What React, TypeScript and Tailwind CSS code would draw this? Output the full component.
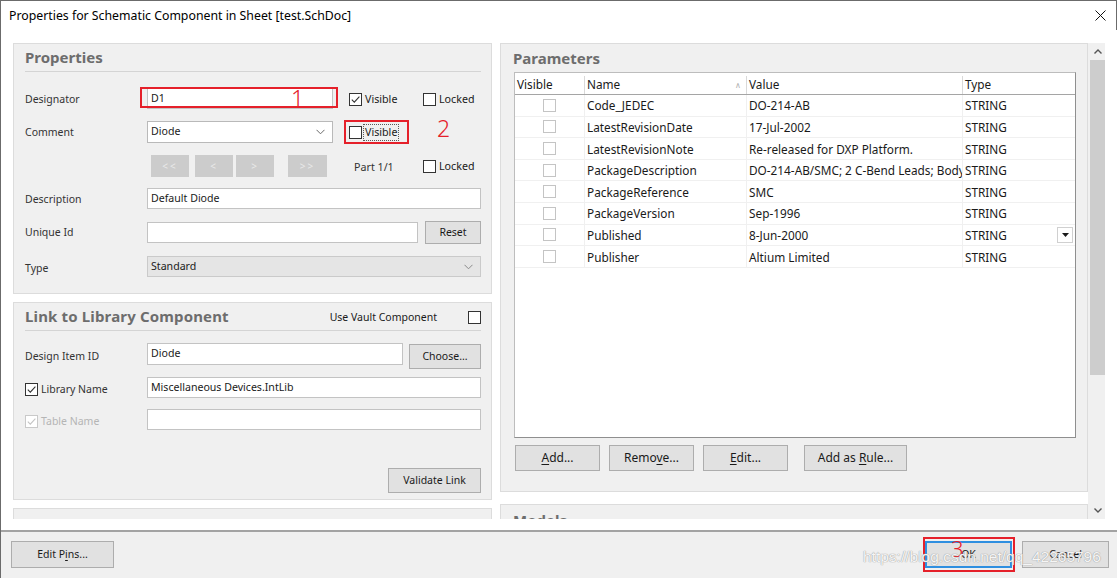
import React from "react";

type Tone = "dark" | "light" | "disabled";

function Check({ checked = false, tone = "dark" }: { checked?: boolean; tone?: Tone }) {
  const border =
    tone === "dark" ? "border-[#333333]" : tone === "light" ? "border-[#c4c4c4]" : "border-[#c9c9c9]";
  return (
    <span className={`flex h-[13px] w-[13px] shrink-0 items-center justify-center border bg-white ${border}`}>
      {checked && (
        <svg width="11" height="11" viewBox="0 0 11 11">
          <path
            d="M1.8 5.6 L4.3 8.1 L9.4 2.6"
            fill="none"
            stroke={tone === "disabled" ? "#c4c4c4" : "#333333"}
            strokeWidth="1.1"
          />
        </svg>
      )}
    </span>
  );
}

function Chevron({ color = "#6a6a6a" }: { color?: string }) {
  return (
    <svg width="9" height="6" viewBox="0 0 9 6">
      <path d="M0.5 0.8 L4.5 4.8 L8.5 0.8" fill="none" stroke={color} strokeWidth="1" />
    </svg>
  );
}

// size class is passed in by the caller (text-[10.5px] or text-[12px])
function Btn({ children, className = "" }: { children: React.ReactNode; className?: string }) {
  return (
    <div
      className={`flex shrink-0 items-center justify-center border border-[#adadad] bg-[#e1e1e1] text-[#1a1a1a] ${className}`}
    >
      <span className="whitespace-pre">{children}</span>
    </div>
  );
}

function Field({ value = "", className = "" }: { value?: string; className?: string }) {
  return (
    <div
      className={`flex shrink-0 items-center border border-[#c3c3c3] bg-white pl-[3px] text-[10.6px] text-[#1a1a1a] ${className}`}
    >
      {value}
    </div>
  );
}

function Label({ children, className = "" }: { children: React.ReactNode; className?: string }) {
  return <div className={`w-[122px] shrink-0 text-[10.5px] text-[#333333] ${className}`}>{children}</div>;
}

function NavBtn({ label, className = "" }: { label: string; className?: string }) {
  return (
    <div
      className={`flex h-[22px] shrink-0 items-center justify-center bg-[#cccccc] text-[10px] tracking-[2px] text-[#e9e9e9] ${className}`}
    >
      {label}
    </div>
  );
}

const params = [
  { name: "Code_JEDEC", value: "DO-214-AB" },
  { name: "LatestRevisionDate", value: "17-Jul-2002" },
  { name: "LatestRevisionNote", value: "Re-released for DXP Platform." },
  { name: "PackageDescription", value: "DO-214-AB/SMC; 2 C-Bend Leads; Body 7.1 x 6.1 mm" },
  { name: "PackageReference", value: "SMC" },
  { name: "PackageVersion", value: "Sep-1996" },
  { name: "Published", value: "8-Jun-2000", drop: true },
  { name: "Publisher", value: "Altium Limited" },
];

function PropertiesPanel() {
  return (
    <div className="h-[251px] shrink-0 border border-[#dcdcdc] bg-[#f0f0f0] pl-[11px] pr-[10px]">
      <div className="flex h-[28px] items-center border-b border-[#d4d4d4] text-[15px] font-bold text-[#6d6d6d]">
        Properties
      </div>

      <div className="mt-[16px] flex h-[21px] items-center">
        <Label className="pt-[3px]">Designator</Label>
        <Field value="D1" className="h-[21px] w-[186px]" />
        <div className="ml-[16px] flex w-[74px] items-center gap-[3px] pt-[2px] text-[10.7px]">
          <Check checked />
          <span>Visible</span>
        </div>
        <div className="flex items-center gap-[3px] pt-[2px] text-[10.7px]">
          <Check />
          <span>Locked</span>
        </div>
      </div>

      <div className="mt-[12px] flex h-[22px] items-center">
        <Label className="pt-[1px]">Comment</Label>
        <div className="flex h-[22px] w-[186px] shrink-0 items-center justify-between border border-[#b9b9b9] bg-white pl-[3px] pr-[7px] text-[10.6px]">
          <span>Diode</span>
          <Chevron />
        </div>
        <div className="ml-[16px] flex w-[74px] items-center gap-[1px] text-[10.7px]">
          <Check />
          <span className="border border-dotted border-[#5a5a5a] px-[1px] leading-[15px]">Visible</span>
        </div>
      </div>

      <div className="mt-[12px] flex h-[22px] items-center">
        <div className="w-[126px] shrink-0" />
        <NavBtn label="<<" className="w-[38px]" />
        <NavBtn label="<" className="ml-[6px] w-[38px]" />
        <NavBtn label=">" className="ml-[3px] w-[38px]" />
        <NavBtn label=">>" className="ml-[14px] w-[39px]" />
        <span className="ml-[27px] w-[69px] pt-[2px] text-[10.7px] text-[#333333]">Part 1/1</span>
        <div className="flex items-center gap-[3px] pt-[1px] text-[10.7px]">
          <Check />
          <span>Locked</span>
        </div>
      </div>

      <div className="mt-[11px] flex h-[21px] items-center">
        <Label className="pt-[2px]">Description</Label>
        <Field value="Default Diode" className="h-[21px] w-[334px]" />
      </div>

      <div className="mt-[12px] flex h-[23px] items-center">
        <Label>Unique Id</Label>
        <Field className="h-[21px] w-[271px]" />
        <Btn className="ml-[7px] h-[23px] w-[56px] text-[10.5px]">Reset</Btn>
      </div>

      <div className="mt-[12px] flex h-[21px] items-center">
        <Label className="pt-[4px]">Type</Label>
        <div className="flex h-[21px] w-[334px] shrink-0 items-center justify-between border border-[#cacaca] bg-[#e5e5e5] pl-[3px] pr-[7px] text-[10.6px]">
          <span>Standard</span>
          <Chevron color="#8a8a8a" />
        </div>
      </div>
    </div>
  );
}

function LinkPanel() {
  return (
    <div className="h-[198px] shrink-0 border border-[#dcdcdc] bg-[#f0f0f0] pl-[11px] pr-[10px]">
      <div className="flex h-[28px] items-center justify-between border-b border-[#d4d4d4]">
        <span className="text-[15px] font-bold tracking-[0.15px] text-[#6d6d6d]">Link to Library Component</span>
        <div className="flex items-center pt-[2px] text-[10.5px] text-[#1a1a1a]">
          <span>Use Vault Component</span>
          <span className="ml-[31px]">
            <Check />
          </span>
        </div>
      </div>

      <div className="mt-[12px] flex h-[26px] items-start">
        <Label className="pt-[6px]">Design Item ID</Label>
        <Field value="Diode" className="h-[22px] w-[256px]" />
        <Btn className="ml-[6px] mt-[1px] h-[25px] w-[72px] text-[10.5px]">Choose...</Btn>
      </div>

      <div className="mt-[8px] flex h-[21px] items-center">
        <div className="flex w-[122px] shrink-0 items-center gap-[3px] pt-[4px] text-[10.5px] text-[#333333]">
          <Check checked />
          <span>Library Name</span>
        </div>
        <Field value="Miscellaneous Devices.IntLib" className="h-[21px] w-[334px]" />
      </div>

      <div className="mt-[11px] flex h-[21px] items-center">
        <div className="flex w-[122px] shrink-0 items-center gap-[3px] pt-[4px] text-[10.5px] text-[#b5b5b5]">
          <Check checked tone="disabled" />
          <span>Table Name</span>
        </div>
        <Field className="h-[21px] w-[334px]" />
      </div>

      <div className="mt-[38px] flex justify-end">
        <Btn className="h-[25px] w-[93px] text-[10.5px]">Validate Link</Btn>
      </div>
    </div>
  );
}

function ParametersPanel() {
  return (
    <div className="h-[449px] shrink-0 border border-[#dcdcdc] bg-[#f0f0f0]">
      <div className="flex h-[28px] items-center pl-[12px] text-[15px] font-bold text-[#6d6d6d]">Parameters</div>
      <div className="ml-[13px] mr-[11px] h-[366px] border border-[#bdbdbd] border-b-[#8f8f8f] border-r-[#8f8f8f] bg-white text-[11.8px] text-[#1a1a1a]">
        <div className="flex h-[22px] border-b border-[#a5a5a5] pt-[3px]">
          <div className="flex w-[70px] items-center border-r border-[#d9d9d9] pl-[2px]">Visible</div>
          <div className="flex w-[162px] items-center justify-between border-r border-[#d9d9d9] pl-[2px] pr-[5px]">
            <span>Name</span>
            <span className="text-[8px] text-[#b0b0b0]">∧</span>
          </div>
          <div className="flex w-[216px] items-center border-r border-[#d9d9d9] pl-[2px]">Value</div>
          <div className="flex flex-1 items-center pl-[2px]">Type</div>
        </div>
        {params.map((p) => (
          <div key={p.name} className="flex h-[21.6px] border-b border-[#f0f0f0]">
            <div className="flex w-[70px] items-center justify-center border-r border-[#f0f0f0]">
              <Check tone="light" />
            </div>
            <div className="flex w-[162px] items-center border-r border-[#f0f0f0] pl-[2px] pt-[2px]">{p.name}</div>
            <div className="flex w-[216px] items-center overflow-hidden whitespace-nowrap border-r border-[#f0f0f0] pl-[2px] pt-[2px]">
              {p.value}
            </div>
            <div className="flex flex-1 items-center justify-between pl-[2px] pr-[2px]">
              <span className="pt-[2px]">STRING</span>
              {p.drop && (
                <span className="flex h-[16px] w-[16px] items-center justify-center border border-[#d0d0d0] bg-white">
                  <svg width="7" height="4" viewBox="0 0 7 4">
                    <path d="M0 0 H7 L3.5 4 Z" fill="#1a1a1a" />
                  </svg>
                </span>
              )}
            </div>
          </div>
        ))}
      </div>
      <div className="ml-[14px] mt-[7px] flex h-[26px] gap-[9px]">
        <Btn className="h-[26px] w-[85px] text-[12px]">
          <span className="underline underline-offset-2">A</span>dd...
        </Btn>
        <Btn className="h-[26px] w-[85px] text-[12px]">
          Remo<span className="underline underline-offset-2">v</span>e...
        </Btn>
        <Btn className="h-[26px] w-[85px] text-[12px]">
          <span className="underline underline-offset-2">E</span>dit...
        </Btn>
        <Btn className="ml-[7px] h-[26px] w-[103px] text-[12px]">
          Add as <span className="underline underline-offset-2">R</span>ule...
        </Btn>
      </div>
    </div>
  );
}

export default function App() {
  return (
    <div className="relative h-[578px] w-[1117px] overflow-hidden border-l border-t border-[#6b6b6b] bg-white font-['Noto_Sans',sans-serif] text-[#1a1a1a]">
      {/* title bar */}
      <div className="flex h-[29px] items-center justify-between border-r border-[#6b6b6b] pl-[8px] pr-[10px]">
        <span className="pt-[1px] text-[12.3px] text-black">Properties for Schematic Component in Sheet [test.SchDoc]</span>
        <svg width="11" height="11" viewBox="0 0 11 11">
          <path d="M0.5 0.5 L10.5 10.5 M10.5 0.5 L0.5 10.5" stroke="#111" strokeWidth="1" />
        </svg>
      </div>

      {/* scrolled content */}
      <div className="flex h-[489px] overflow-hidden pl-[12px] pt-[13px]">
        <div className="flex w-[479px] shrink-0 flex-col gap-[8px]">
          <PropertiesPanel />
          <LinkPanel />
          <div className="h-[120px] shrink-0 border border-[#dcdcdc] bg-[#f0f0f0] pl-[11px] pt-[4px] text-[15px] font-bold text-[#6d6d6d]">
            Graphical
          </div>
        </div>
        <div className="ml-[8px] flex w-[588px] shrink-0 flex-col gap-[12px]">
          <ParametersPanel />
          <div className="h-[120px] shrink-0 border border-[#dcdcdc] bg-[#f0f0f0] pl-[12px] pt-[4px] text-[15px] font-bold text-[#6d6d6d]">
            Models
          </div>
        </div>
        <div className="flex w-[17px] shrink-0 flex-col bg-[#f0f0f0]">
          <div className="flex h-[17px] items-center justify-center pl-[2px]">
            <svg width="8" height="5" viewBox="0 0 8 5">
              <path d="M0.5 4.5 L4 1 L7.5 4.5" fill="none" stroke="#555" strokeWidth="1.4" />
            </svg>
          </div>
          <div className="ml-[2px] h-[315px] bg-[#cdcdcd]" />
          <div className="flex-1" />
          <div className="flex h-[17px] items-center justify-center pl-[2px]">
            <svg width="8" height="5" viewBox="0 0 8 5">
              <path d="M0.5 0.5 L4 4 L7.5 0.5" fill="none" stroke="#555" strokeWidth="1.4" />
            </svg>
          </div>
        </div>
      </div>
      <div className="h-[11px]" />

      {/* footer */}
      <div className="flex h-[48px] items-start border-t-2 border-[#a3a3a3] bg-[#f0f0f0] pl-[10px] pt-[9px]">
        <Btn className="h-[27px] w-[103px] text-[10.5px]">
          Edit P<span className="underline underline-offset-2">i</span>ns...
        </Btn>
        <div className="flex-1" />
        <div className="flex h-[27px] w-[87px] items-center justify-center border-2 border-[#2f8fe0] bg-[#e1e1e1] text-[10.5px]">
          OK
        </div>
        <Btn className="ml-[10px] mr-[8px] h-[27px] w-[87px] text-[10.5px]">Cancel</Btn>
      </div>

      {/* annotations drawn over the dialog */}
      <div className="absolute left-[139px] top-[86px] h-[21px] w-[198px] border-2 border-[#e5202a]" />
      <span className="absolute left-[290px] top-[86px] text-[23px] font-light leading-none text-[#e5202a]">1</span>
      <div className="absolute left-[343px] top-[119px] h-[24px] w-[65px] border-2 border-[#e5202a]" />
      <span className="absolute left-[436px] top-[116px] text-[23px] font-light leading-none text-[#e5202a]">2</span>
      <div className="absolute left-[922px] top-[536px] h-[35px] w-[92px] border-2 border-[#e5202a]" />
      <span className="absolute left-[950px] top-[536px] text-[22px] font-light leading-none text-[#e5202a]">3</span>
      <span className="absolute left-[862px] top-[548px] font-['Liberation_Sans',sans-serif] text-[15.5px] leading-none text-white/90 [text-shadow:0_0_1px_#9a9a9a,0_0_1px_#9a9a9a]">
        https://blog.csdn.net/qq_42265796
      </span>
    </div>
  );
}
